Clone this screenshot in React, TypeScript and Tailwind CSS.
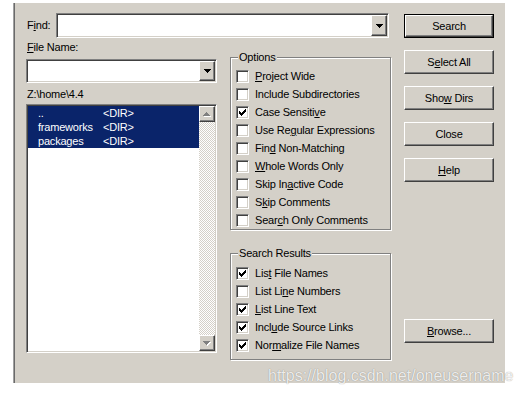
import React from "react";

const sunken =
  "border border-t-[#808080] border-l-[#808080] border-b-white border-r-white shadow-[inset_1px_1px_0_#404040,inset_-1px_-1px_0_#d4d0c8]";
const raised =
  "border border-t-white border-l-white border-b-[#404040] border-r-[#404040] shadow-[inset_-1px_-1px_0_#808080]";

// "&" marks the mnemonic letter
function Mn({ t }: { t: string }) {
  const i = t.indexOf("&");
  if (i < 0) return <span>{t}</span>;
  return (
    <span className="whitespace-pre">
      {t.slice(0, i)}
      <span className="underline decoration-1 underline-offset-[1px]">{t[i + 1]}</span>
      {t.slice(i + 2)}
    </span>
  );
}

const DownArrow = () => (
  <svg width="7" height="4" viewBox="0 0 7 4" shapeRendering="crispEdges">
    <path d="M0 0h7v1h-1v1h-1v1h-1v1h-1v-1h-1v-1h-1v-1h-1z" fill="#000" />
  </svg>
);

const GrayArrow = ({ up }: { up?: boolean }) => {
  const d = up
    ? "M3 0h1v1h1v1h1v1h1v1h-7v-1h1v-1h1v-1h1z"
    : "M0 0h7v1h-1v1h-1v1h-1v1h-1v-1h-1v-1h-1v-1h-1z";
  return (
    <svg width="8" height="5" viewBox="0 0 8 5" shapeRendering="crispEdges">
      <path d={d} fill="#fff" transform="translate(1 1)" />
      <path d={d} fill="#808080" />
    </svg>
  );
};

function Combo({ className }: { className: string }) {
  return (
    <div className={`flex justify-end bg-white p-px ${sunken} ${className}`}>
      <div className={`flex w-[16px] items-center justify-center bg-[#d4d0c8] ${raised}`}>
        <DownArrow />
      </div>
    </div>
  );
}

const Tick = () => (
  <svg width="7" height="7" viewBox="0 0 7 7" shapeRendering="crispEdges">
    <path
      d="M6 0h1v1h-1zM5 1h2v1h-2zM0 2h1v1h-1zM4 2h3v1h-3zM0 3h2v1h-2zM3 3h3v1h-3zM0 4h5v1h-5zM1 5h3v1h-3zM2 6h1v1h-1z"
      fill="#000"
    />
  </svg>
);

function Check({ label, checked }: { label: string; checked?: boolean }) {
  return (
    <div className="flex h-[17.9px] items-center gap-[6px]">
      <span className={`flex h-[13px] w-[13px] shrink-0 items-center justify-center bg-white ${sunken}`}>
        {checked && <Tick />}
      </span>
      <Mn t={label} />
    </div>
  );
}

function Group({
  title,
  className,
  children,
}: {
  title: string;
  className: string;
  children: React.ReactNode;
}) {
  return (
    <div
      className={`relative border border-[#808080] pl-[5px] shadow-[inset_1px_1px_0_#fff,1px_1px_0_#fff] ${className}`}
    >
      <span className="absolute top-[-7px] left-[7px] bg-[#d4d0c8] px-px leading-[13px]">{title}</span>
      {children}
    </div>
  );
}

function Button({ label, primary, className = "" }: { label: string; primary?: boolean; className?: string }) {
  return (
    <div className={`h-[24px] w-[90px] ${primary ? "border border-black" : ""} ${className}`}>
      <div className={`flex h-full w-full items-center justify-center ${raised}`}>
        <Mn t={label} />
      </div>
    </div>
  );
}

const rows = [
  ["..", "<DIR>"],
  ["frameworks", "<DIR>"],
  ["packages", "<DIR>"],
];

export default function App() {
  return (
    <div className="relative h-[397px] w-[521px] overflow-hidden bg-white pt-[3px] pl-[13px] font-['Liberation_Sans',Arial,sans-serif] text-[11px] leading-[13px] tracking-[-0.2px] text-black">
      <div className="flex h-[380px] w-[492px] gap-[13px] bg-[#d4d0c8] pt-[10px] pl-[13px] shadow-[inset_1px_0_0_#a0a0a0,inset_2px_0_0_#6a6a6a]">
        {/* left + options */}
        <div className="flex w-[365px] flex-col">
          <div className="flex h-[25px] w-[363px] items-center">
            <span className="w-[30px] pl-px">
              <Mn t="F&ind:" />
            </span>
            <Combo className="h-[25px] flex-1" />
          </div>

          <div className="flex gap-[13px]">
            <div className="flex w-[191px] flex-col">
              <div className="mt-[3px] pl-px">
                <Mn t="&File Name:" />
              </div>
              <Combo className="mt-[5px] h-[24px]" />
              <div className="mt-[5px] pl-px">Z:\home\4.4</div>
              <div className={`mt-[3px] flex h-[249px] bg-white p-px ${sunken}`}>
                <div className="flex-1">
                  {rows.map(([name, kind]) => (
                    <div key={name} className="flex h-[14px] items-center bg-[#0a246a] text-white">
                      <span className="w-[75px] pl-[10px]">{name}</span>
                      <span>{kind}</span>
                    </div>
                  ))}
                </div>
                <div className="flex w-[16px] flex-col">
                  <div className={`flex h-[16px] items-center justify-center bg-[#d4d0c8] ${raised}`}>
                    <GrayArrow up />
                  </div>
                  <div className="flex-1 bg-[repeating-conic-gradient(#d4d0c8_0%_25%,#ffffff_0%_50%)] bg-size-[2px_2px]" />
                  <div className={`flex h-[16px] items-center justify-center bg-[#d4d0c8] ${raised}`}>
                    <GrayArrow />
                  </div>
                </div>
              </div>
            </div>

            <div className="flex w-[161px] flex-col">
              <Group title="Options" className="mt-[19px] h-[173px] pt-[10px]">
                <Check label="&Project Wide" />
                <Check label="Include Subdirectories" />
                <Check label="Case Sensiti&ve" checked />
                <Check label="Use Re&gular Expressions" />
                <Check label="Fin&d Non-Matching" />
                <Check label="&Whole Words Only" />
                <Check label="Skip In&active Code" />
                <Check label="S&kip Comments" />
                <Check label="Sear&ch Only Comments" />
              </Group>
              <Group title="Search Results" className="mt-[23px] h-[107px] pt-[11px]">
                <Check label="Lis&t File Names" checked />
                <Check label="List Li&ne Numbers" />
                <Check label="&List Line Text" checked />
                <Check label="Incl&ude Source Links" checked />
                <Check label="Nor&malize File Names" checked />
              </Group>
            </div>
          </div>
        </div>

        {/* buttons */}
        <div className="mt-px flex flex-col gap-[12px]">
          <Button label="Search" primary />
          <Button label="S&elect All" />
          <Button label="Sho&w Dirs" />
          <Button label="Close" />
          <Button label="&Help" />
          <Button label="&Browse..." className="mt-[125px]" />
        </div>
      </div>

      <div className="absolute top-[368px] left-[268px] text-[16px] leading-[16px] tracking-normal whitespace-nowrap text-white/85 [text-shadow:0_0_1px_rgba(0,0,0,0.45)]">
        https://blog.csdn.net/oneusername
      </div>
    </div>
  );
}
